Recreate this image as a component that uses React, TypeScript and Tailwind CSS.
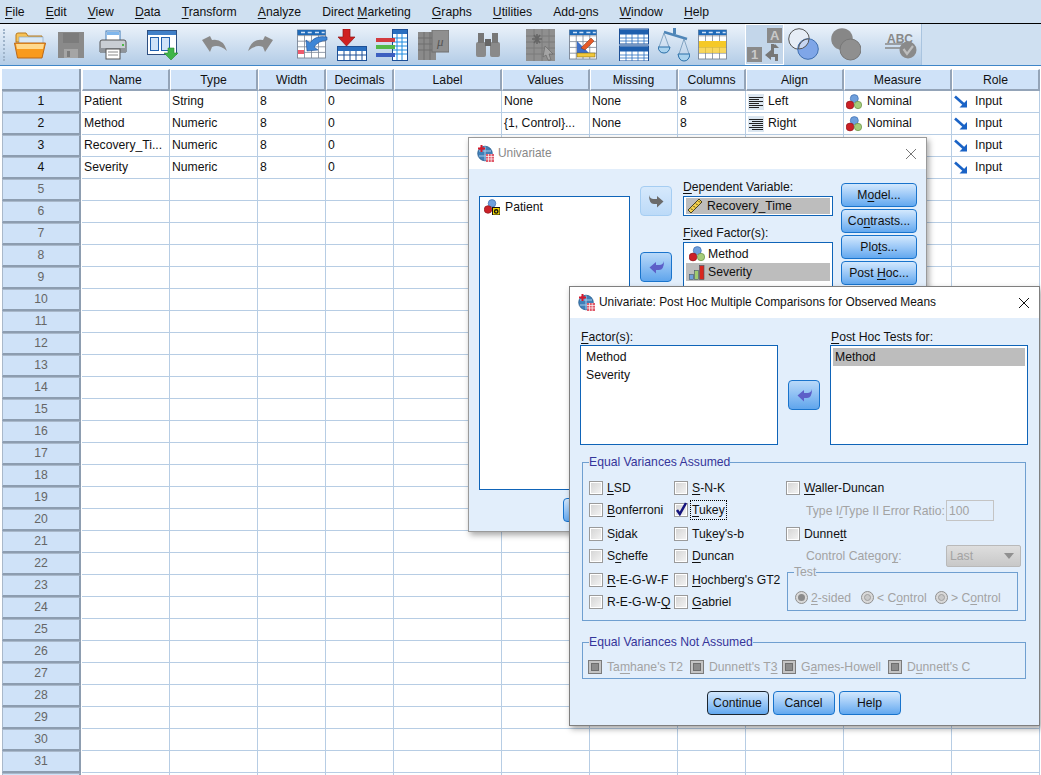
import React from 'react';

const MENU: [string, number][] = [
  ['File', 0], ['Edit', 0], ['View', 0], ['Data', 0], ['Transform', 0], ['Analyze', 0],
  ['Direct Marketing', 7], ['Graphs', 0], ['Utilities', 0], ['Add-ons', 4], ['Window', 0], ['Help', 0],
];

const COLUMNS = ['Name', 'Type', 'Width', 'Decimals', 'Label', 'Values', 'Missing', 'Columns', 'Align', 'Measure', 'Role'];

// rows 3 and 4 are covered by the dialogs from Values onward, so those cells stay empty
const ROWS = [
  { name: 'Patient', type: 'String', values: 'None', missing: 'None', cols: '8', align: 'Left', measure: 'nominal', label: 'Nominal' },
  { name: 'Method', type: 'Numeric', values: '{1, Control}...', missing: 'None', cols: '8', align: 'Right', measure: 'nominal', label: 'Nominal' },
  { name: 'Recovery_Ti...', type: 'Numeric', values: '', missing: '', cols: '', align: '', measure: 'scale', label: '' },
  { name: 'Severity', type: 'Numeric', values: '', missing: '', cols: '', align: '', measure: '', label: '' },
];

const cell = 'h-[22px] border-r border-b border-[#b7cde4] bg-white pl-[2px] leading-[21px] whitespace-nowrap overflow-hidden';
const rowHead = 'ml-[2px] mr-[1px] flex h-[22px] items-center justify-center border border-[#a9b8ca] border-r-2 border-b-2 border-r-[#8d9db0] border-b-[#8d9db0] bg-[#cfe2f8]';

// label with one underlined mnemonic letter
function M({ t, u }: { t: string; u?: number }) {
  if (u === undefined) return <span>{t}</span>;
  return (
    <span>
      {t.slice(0, u)}
      <span className="underline underline-offset-2">{t[u]}</span>
      {t.slice(u + 1)}
    </span>
  );
}

function Balls({ size = 16 }: { size?: number }) {
  return (
    <svg width={size} height={size} viewBox="0 0 16 16" className="shrink-0">
      <circle cx="8.3" cy="4.6" r="4" fill="#6f9fdc" stroke="#3f6fb0" strokeWidth="0.7" />
      <circle cx="4" cy="11" r="3.9" fill="#cc2027" stroke="#8f1a1f" strokeWidth="0.7" />
      <circle cx="12" cy="11" r="3.7" fill="#a5cc7a" stroke="#688f45" strokeWidth="0.7" />
    </svg>
  );
}

function InputArrow() {
  return (
    <svg width="14" height="14" viewBox="0 0 14 14" className="shrink-0">
      <path d="M1 1.5 L10 9.5" stroke="#1a63c6" strokeWidth="2.6" />
      <path d="M13 5 V12.5 H5.5 Z" fill="#1a63c6" />
    </svg>
  );
}

function AlignIcon({ right }: { right?: boolean }) {
  const lines = right ? [[1, 15], [4, 15], [1, 15], [4, 15], [1, 15], [4, 15]] : [[1, 15], [1, 11], [1, 15], [1, 11], [1, 15], [1, 11]];
  return (
    <svg width="16" height="16" viewBox="0 0 16 16" className="shrink-0">
      <rect width="16" height="16" fill="#dbe6f0" />
      {lines.map(([a, b], i) => (
        <path key={i} d={`M${a} ${3.5 + i * 2} H${b}`} stroke="#222" strokeWidth="1" />
      ))}
    </svg>
  );
}

function Ruler() {
  return (
    <svg width="16" height="16" viewBox="0 0 16 16" className="shrink-0">
      <path d="M1 12 L12 1 L15 4 L4 15 Z" fill="#f2cf4d" stroke="#3a3315" strokeWidth="0.9" />
      <path d="M4 10.5 L5.5 12 M6.5 8 L8 9.5 M9 5.5 L10.5 7 M11.5 3 L13 4.5" stroke="#3a3315" strokeWidth="0.9" />
    </svg>
  );
}

function Bars() {
  return (
    <svg width="16" height="16" viewBox="0 0 16 16" className="shrink-0">
      <rect x="0.5" y="10.5" width="4" height="5" fill="#6f9fdc" stroke="#456" strokeWidth="0.6" />
      <rect x="5.5" y="6.5" width="4" height="9" fill="#9fcb6f" stroke="#456" strokeWidth="0.6" />
      <rect x="10.5" y="1.5" width="4.5" height="14" fill="#d9261f" stroke="#456" strokeWidth="0.6" />
    </svg>
  );
}

function StringVar() {
  return (
    <svg width="16" height="16" viewBox="0 0 16 16" className="shrink-0">
      <circle cx="8" cy="4.4" r="3.8" fill="#6f9fdc" stroke="#3f6fb0" strokeWidth="0.7" />
      <circle cx="4" cy="10.5" r="3.8" fill="#cc2027" stroke="#8f1a1f" strokeWidth="0.7" />
      <rect x="8.5" y="8.5" width="7.5" height="7.5" fill="#f5d800" stroke="#111" />
      <circle cx="12.2" cy="12.4" r="1.7" fill="none" stroke="#111" strokeWidth="1.4" />
    </svg>
  );
}

function AppIcon() {
  return (
    <svg width="17" height="17" viewBox="0 0 17 17" className="shrink-0">
      <circle cx="8" cy="8.5" r="7.3" fill="#3f7fb8" stroke="#2d5f8f" strokeWidth="0.8" />
      <path d="M2 6 H14 M2 11 H14 M8 1.5 V15.5" stroke="#a9cbe8" strokeWidth="1" />
      <path d="M4.5 0 V7 M1 3.5 H8" stroke="#d7182a" strokeWidth="2" />
      <rect x="9" y="9" width="8" height="8" fill="#e05a6a" />
      <path d="M9 11.5 H17 M9 14 H17 M11.5 9 V17 M14.2 9 V17" stroke="#fff" strokeWidth="0.7" />
    </svg>
  );
}

function GridTable({ x, y, w, h, cols, rows, line = '#1c4f96' }: { x: number; y: number; w: number; h: number; cols: number; rows: number; line?: string }) {
  const out: React.ReactNode[] = [];
  for (let i = 1; i < cols; i++) {
    const px = x + (w * i) / cols;
    out.push(<path key={'c' + i} d={`M${px} ${y} V${y + h}`} stroke={line} strokeWidth="0.8" />);
  }
  for (let i = 1; i < rows; i++) {
    const py = y + (h * i) / rows;
    out.push(<path key={'r' + i} d={`M${x} ${py} H${x + w}`} stroke={line} strokeWidth="0.8" />);
  }
  return (
    <g>
      <rect x={x} y={y} width={w} height={h} fill="#fff" stroke={line} strokeWidth="0.9" />
      {out}
    </g>
  );
}

function TopTable({ w, h }: { w: number; h: number }) {
  return (
    <g>
      <GridTable x={0.5} y={1} w={w - 1} h={h - 2} cols={4} rows={5} line="#7a8595" />
      <rect x={0.5} y={1} width={w - 1} height={5} fill="#1f6ab8" />
      <path d={`M4 3.5 h4 M${w * 0.37} 3.5 h4 M${w * 0.62} 3.5 h4 M${w * 0.85} 3.5 h3`} stroke="#cfe2f8" strokeWidth="1.4" />
    </g>
  );
}

const gi = 'fill-[#8a8a8a]';

function Toolbar() {
  return (
    <div className="flex h-[41px] w-[922px] items-center border-r border-[#a9c4df] bg-gradient-to-b from-[#ecf3fb] to-[#b3cce6] pl-[3px]">
      <div className="h-[32px] w-[3px] shrink-0 border-l-2 border-dotted border-[#9fb4ca]" />
      {/* open */}
      <svg width="32" height="28" viewBox="0 0 32 28" className="ml-[8px] shrink-0">
        <path d="M2 4 Q2 2 4 2 H12 L14 5 H28 V11 H2 Z" fill="#f6c257" stroke="#b9791d" />
        <rect x="5" y="6" width="24" height="8" fill="#d8e8f6" stroke="#7f9fc0" strokeWidth="0.6" />
        <path d="M0.5 12 H31.5 L28 27 H3.5 Z" fill="#f99a1c" stroke="#b9681a" />
        <path d="M2 13 H30 L29 18 H3 Z" fill="#ffd98d" />
      </svg>
      {/* save */}
      <svg width="26" height="26" viewBox="0 0 26 26" className="ml-[12px] shrink-0">
        <rect width="26" height="26" className={gi} />
        <rect x="5" y="1" width="16" height="10" fill="#7c7c7c" />
        <rect x="6" y="17" width="14" height="9" fill="#a5a5a5" />
        <rect x="9" y="19" width="3" height="6" fill="#7c7c7c" />
      </svg>
      {/* print */}
      <svg width="28" height="30" viewBox="0 0 28 30" className="ml-[15px] shrink-0">
        <rect x="7" y="1" width="14" height="11" fill="#fff" stroke="#3f7ab8" />
        <rect x="8" y="2" width="12" height="3" fill="#7fb6ec" />
        <path d="M1 12 Q1 10 3 10 H25 Q27 10 27 12 V22 H1 Z" fill="#c9ced4" stroke="#555" />
        <rect x="1" y="18" width="26" height="4" fill="#8f949a" />
        <rect x="7" y="19" width="14" height="10" fill="#fff" stroke="#555" />
        <path d="M9 22 H19 M9 25 H19" stroke="#888" />
        <rect x="23" y="14" width="2" height="2" fill="#4db848" />
      </svg>
      {/* recall */}
      <svg width="31" height="30" viewBox="0 0 31 30" className="ml-[20px] shrink-0">
        <rect x="0.5" y="0.5" width="29" height="24" fill="#fff" stroke="#2e4f80" />
        <rect x="1" y="1" width="28" height="4" fill="#3f7fc8" />
        <rect x="3.5" y="7.5" width="8" height="13" fill="#cfe2f8" stroke="#1f5fae" />
        <rect x="14.5" y="7.5" width="8" height="13" fill="#cfe2f8" stroke="#1f5fae" />
        <path d="M21 18 H27 V23 H31 L24 30 L17 23 H21 Z" fill="#3fb548" stroke="#2b8a34" strokeWidth="0.6" />
      </svg>
      {/* undo */}
      <svg width="28" height="18" viewBox="0 0 28 18" className="ml-[23px] shrink-0">
        <path d="M1 4 L9 16 L11 11 Q18 8 26 15 Q22 2 11 4 L9 0 Z" className={gi} />
      </svg>
      {/* redo */}
      <svg width="28" height="18" viewBox="0 0 28 18" className="ml-[17px] shrink-0">
        <path d="M27 4 L19 16 L17 11 Q10 8 2 15 Q6 2 17 4 L19 0 Z" className={gi} />
      </svg>
      {/* go to case */}
      <svg width="31" height="31" viewBox="0 0 31 31" className="ml-[23px] shrink-0">
        <TopTable w={29} h={30} />
        <rect x="1" y="21" width="6" height="4" fill="#ee5a6c" />
        <path d="M30 8 Q18 6 13 14 L9 11 L10 22 L21 21 L17 18 Q21 12 30 11 Z" fill="#3e86d6" stroke="#1d4f96" strokeWidth="0.6" />
      </svg>
      {/* insert cases */}
      <svg width="30" height="32" viewBox="0 0 30 32" className="ml-[9px] shrink-0">
        <path d="M6 0 H13 V8 H18 L9.5 17 L1 8 H6 Z" fill="#cf2020" stroke="#8c1414" strokeWidth="0.7" />
        <rect x="0.5" y="17.5" width="29" height="14" fill="#fff" stroke="#1c4f96" />
        <rect x="1" y="18" width="28" height="4" fill="#2a6fc0" />
        <path d="M1 26 H29 M7 22 V31 M13 22 V31 M19 22 V31 M25 22 V31" stroke="#1c4f96" />
      </svg>
      {/* split */}
      <svg width="32" height="32" viewBox="0 0 32 32" className="ml-[9px] shrink-0">
        <rect x="16.5" y="0.5" width="15" height="31" fill="#fff" stroke="#1c4f96" />
        <rect x="17" y="1" width="14" height="4" fill="#2a6fc0" />
        <path d="M17 9 H31 M17 13 H31 M17 17 H31 M17 21 H31 M17 25 H31 M21 5 V31 M26 5 V31" stroke="#1c8be0" />
        <rect x="0" y="9" width="19" height="4" fill="#d23b3f" />
        <rect x="0" y="16" width="19" height="4" fill="#53b948" />
        <rect x="0" y="24" width="19" height="4" fill="#3d5fc0" />
      </svg>
      {/* variables, disabled */}
      <svg width="31" height="30" viewBox="0 0 31 30" className="ml-[10px] shrink-0">
        <rect x="0" y="2" width="18" height="28" className={gi} />
        <path d="M0 8 H18 M0 14 H18 M0 20 H18 M6 2 V30 M12 2 V30" stroke="#6f6f6f" />
        <rect x="14" y="0" width="17" height="22" fill="#8f8f8f" stroke="#6f6f6f" />
        <text x="19" y="16" fontSize="13" fontFamily="'Liberation Serif', serif" fontStyle="italic" fill="#555">μ</text>
      </svg>
      {/* find */}
      <svg width="28" height="26" viewBox="0 0 28 26" className="ml-[25px] shrink-0">
        <rect x="2" y="10" width="10" height="15" rx="2" className={gi} />
        <rect x="16" y="10" width="10" height="15" rx="2" className={gi} />
        <rect x="4" y="1" width="6" height="10" fill="#777" />
        <rect x="18" y="1" width="6" height="10" fill="#777" />
        <rect x="11" y="7" width="6" height="7" fill="#666" />
      </svg>
      {/* select cases, disabled */}
      <svg width="29" height="32" viewBox="0 0 29 32" className="ml-[24px] shrink-0">
        <rect x="0" y="0" width="29" height="32" fill="#8f8f8f" />
        <path d="M0 7 H29 M0 13 H29 M0 19 H29 M0 25 H29 M8 0 V32 M16 0 V32 M23 0 V32" stroke="#7b7b7b" />
        <path d="M8 6 L14 14 M14 6 L8 14 M11 5 V15 M6 10 H16" stroke="#666" strokeWidth="1.6" />
        <path d="M19 17 L27 25 H23 L25 31 H22 L20 26 L17 28 Z" fill="#a4a4a4" stroke="#6a6a6a" strokeWidth="0.7" />
      </svg>
      {/* weight / ruler table */}
      <svg width="28" height="32" viewBox="0 0 28 32" className="ml-[14px] shrink-0">
        <TopTable w={28} h={31} />
        <path d="M8 12 V24 H20 Z" fill="#3d6fc8" />
        <path d="M12 19 L22 9 L25 12 L16 21 Z" fill="#e65a28" stroke="#7a3015" strokeWidth="0.5" />
        <rect x="8" y="24" width="18" height="4" fill="#f2c83a" stroke="#6e5a10" strokeWidth="0.5" />
      </svg>
      {/* split file tables */}
      <svg width="30" height="33" viewBox="0 0 30 33" className="ml-[22px] shrink-0">
        <rect x="0.5" y="1" width="29" height="15" fill="#fff" stroke="#1c4f96" />
        <rect x="1" y="1.5" width="28" height="5" fill="#1f5fae" />
        <path d="M1 10 H29 M1 13 H29 M7 6 V16 M13 6 V16 M19 6 V16 M25 6 V16" stroke="#2a6fc0" strokeWidth="0.8" />
        <rect x="0.5" y="18" width="29" height="15" fill="#fff" stroke="#1c4f96" />
        <rect x="1" y="18.5" width="28" height="5" fill="#1f5fae" />
        <path d="M1 27 H29 M1 30 H29 M7 23 V33 M13 23 V33 M19 23 V33 M25 23 V33" stroke="#2a6fc0" strokeWidth="0.8" />
      </svg>
      {/* weight scales */}
      <svg width="32" height="34" viewBox="0 0 32 34" className="ml-[9px] shrink-0">
        <path d="M15 0 H18 V6 H15 Z" fill="#4f86b8" />
        <path d="M6 4 L29 11" stroke="#4f86b8" strokeWidth="2.4" />
        <path d="M6 5 L1 19 M6 5 L11 19 M26 11 L21 26 M26 11 L31 26" stroke="#6f95b8" strokeWidth="0.8" />
        <path d="M0 19 H12 Q11 25 6 25 Q1 25 0 19 Z" fill="#a9d2ee" stroke="#2a6fa8" />
        <path d="M20 26 H32 Q31 33 26 33 Q21 33 20 26 Z" fill="#a9d2ee" stroke="#2a6fa8" />
      </svg>
      {/* select table */}
      <svg width="29" height="32" viewBox="0 0 29 32" className="ml-[8px] shrink-0">
        <TopTable w={29} h={31} />
        <rect x="1" y="12" width="27" height="6" fill="#f5c928" />
        <rect x="1" y="18" width="27" height="6" fill="#f5c928" opacity="0.75" />
      </svg>
      {/* value labels, pressed */}
      <div className="ml-[18px] flex h-[41px] w-[39px] shrink-0 items-center justify-center border border-white bg-[#c3d6ea]">
        <svg width="35" height="34" viewBox="0 0 35 34">
          <rect x="20" y="0" width="15" height="15" className={gi} />
          <text x="23" y="12" fontSize="13" fontWeight="bold" fontFamily="'Liberation Sans', sans-serif" fill="#c9c9c9">A</text>
          <rect x="0" y="19" width="15" height="15" className={gi} />
          <text x="4" y="31" fontSize="13" fontWeight="bold" fontFamily="'Liberation Sans', sans-serif" fill="#c9c9c9">1</text>
          <path d="M24 16 H27 V26 H31 V33 H28 V29 H24 V32 L18 27 L24 22 Z" fill="#777" />
          <path d="M28 16 L24 20 H32 Z" fill="#777" />
        </svg>
      </div>
      {/* circles */}
      <svg width="31" height="33" viewBox="0 0 31 33" className="ml-[4px] shrink-0">
        <circle cx="11" cy="11" r="10.3" fill="#e6edf6" stroke="#555" />
        <circle cx="20" cy="21" r="10.3" fill="#7fa6e8" stroke="#3f6fb0" />
        <path d="M10.5 21 A10.3 10.3 0 0 1 21 10.8 A10.3 10.3 0 0 1 10.5 21 Z" fill="#c7d6f2" stroke="#555" />
      </svg>
      {/* grey circles */}
      <svg width="30" height="33" viewBox="0 0 30 33" className="ml-[12px] shrink-0">
        <circle cx="11" cy="11" r="10.8" fill="#878787" />
        <circle cx="19.5" cy="21.5" r="10.5" fill="#8f8f8f" stroke="#777" />
      </svg>
      {/* spell check */}
      <svg width="32" height="28" viewBox="0 0 32 28" className="ml-[24px] shrink-0">
        <text x="2" y="12" fontSize="12" fontWeight="bold" fontFamily="'Liberation Sans', sans-serif" fill="#888">ABC</text>
        <path d="M0 13 H28 M0 17 H18" stroke="#888" strokeWidth="1.4" />
        <circle cx="23" cy="19" r="8.5" fill="#8a8a8a" />
        <path d="M18.5 18 L22 23 L28 15" fill="none" stroke="#bdbdbd" strokeWidth="2.2" />
      </svg>
    </div>
  );
}

function ArrowBtn({ right, off }: { right?: boolean; off?: boolean }) {
  return (
    <div
      className={
        off
          ? 'flex h-[30px] w-[32px] items-center justify-center rounded-[4px] border border-[#a5cdf2] bg-gradient-to-b from-[#d6e9fc] to-[#bcdaf8]'
          : 'flex h-[30px] w-[32px] items-center justify-center rounded-[4px] border border-[#1a74cc] bg-gradient-to-b from-[#b9d9f9] to-[#5fa5ec]'
      }
    >
      <svg width="15" height="13" viewBox="0 0 15 13" className={right ? '' : '-scale-x-100'}>
        <path d="M0 0 Q1 4 4.5 4 H8 V1 L14.5 6.5 L8 12.5 V9 H5 Q0 9 0 0 Z" fill={off ? '#6b6b6b' : '#5d5fc8'} />
      </svg>
    </div>
  );
}

function Btn({ children, w = 'w-[76px]', focus }: { children: React.ReactNode; w?: string; focus?: boolean }) {
  return (
    <div
      className={`flex h-[24px] ${w} shrink-0 items-center justify-center rounded-[4px] border bg-gradient-to-b from-[#d3e8fd] to-[#62a8ef] ${focus ? 'border-[#1c2630]' : 'border-[#1873cc]'}`}
    >
      {children}
    </div>
  );
}

function Check({ on, off }: { on?: boolean; off?: boolean }) {
  return (
    <div
      className={`relative flex h-[14px] w-[14px] shrink-0 items-center justify-center border ${off ? 'border-[#7b7b7b] bg-[#c4c4c4]' : 'border-[#9a9a9a] bg-white'}`}
    >
      <div className={off ? 'h-[8px] w-[8px] border border-[#6f6f6f] bg-[#8c8c8c]' : 'h-[10px] w-[10px] bg-gradient-to-br from-[#d6d6d6] to-[#f2f2f2]'} />
      {on && (
        <svg width="13" height="15" viewBox="0 0 13 15" className="absolute left-[0px] top-[-3px]">
          <path d="M2 9 L4.8 13 L11 2" fill="none" stroke="#14147e" strokeWidth="2.5" />
        </svg>
      )}
    </div>
  );
}

function CheckRow({ t, u, on, focus }: { t: string; u: number; on?: boolean; focus?: boolean }) {
  return (
    <div className="flex h-[14px] items-center gap-[4px]">
      <Check on={on} />
      <span className={focus ? '-ml-[2px] border border-dotted border-black px-[1px] leading-[18px]' : ''}>
        <M t={t} u={u} />
      </span>
    </div>
  );
}

function Radio({ t, u, on, w }: { t: string; u: number; on?: boolean; w: string }) {
  return (
    <div className={`flex ${w} items-center gap-[3px] text-[#a3a3a3]`}>
      <div className="flex h-[13px] w-[13px] shrink-0 items-center justify-center rounded-full border border-[#909090] bg-[#d9d9d9]">
        <div className={`h-[7px] w-[7px] rounded-full ${on ? 'bg-[#8b8b8b]' : 'border border-[#a0a0a0] bg-[#c9c9c9]'}`} />
      </div>
      <M t={t} u={u} />
    </div>
  );
}

function TitleBar({ title, dim }: { title: string; dim?: boolean }) {
  return (
    <div className={`flex h-[31px] shrink-0 items-center bg-white pl-[8px] pr-[9px] text-[11.9px] ${dim ? 'text-[#888]' : 'text-[#111]'}`}>
      <AppIcon />
      <span className="ml-[4px] flex-1">{title}</span>
      <svg width="12" height="12" viewBox="0 0 12 12">
        <path d="M1 1 L11 11 M11 1 L1 11" stroke={dim ? '#777' : '#111'} strokeWidth="1" />
      </svg>
    </div>
  );
}

function UnivariateDialog() {
  return (
    <div className="absolute left-[468px] top-[137px] flex h-[395px] w-[459px] flex-col border border-[#9a9a9a] bg-[#e2eefb] shadow-[2px_3px_6px_rgba(0,0,0,0.35)]">
      <TitleBar title="Univariate" dim />
      <div className="flex items-start pl-[10px] pt-[27px]">
        <div className="h-[294px] w-[151px] shrink-0 border border-[#0f64b8] bg-white pl-[4px] pt-[1px]">
          <div className="flex h-[18px] items-center gap-[5px]">
            <StringVar />
            Patient
          </div>
        </div>
        <div className="ml-[10px] -mt-[10px] flex w-[32px] shrink-0 flex-col gap-[36px]">
          <ArrowBtn right off />
          <ArrowBtn />
        </div>
        <div className="ml-[11px] -mt-[17px] flex w-[150px] shrink-0 flex-col">
          <div className="h-[17px] leading-[17px]"><M t="Dependent Variable:" u={0} /></div>
          <div className="flex h-[20px] items-center border border-[#0f64b8] bg-white p-[2px]">
            <div className="flex h-[16px] w-full items-center gap-[4px] bg-[#bdbdbd] pl-[1px]">
              <Ruler />
              Recovery_Time
            </div>
          </div>
          <div className="mt-[9px] h-[17px] leading-[17px]"><M t="Fixed Factor(s):" u={0} /></div>
          <div className="h-[72px] border border-[#0f64b8] bg-white p-[2px]">
            <div className="flex h-[18px] items-center gap-[3px] pl-[3px]">
              <Balls />
              Method
            </div>
            <div className="flex h-[18px] items-center gap-[3px] bg-[#bdbdbd] pl-[3px]">
              <Bars />
              Severity
            </div>
          </div>
        </div>
        <div className="ml-[8px] -mt-[13px] flex flex-col gap-[2px]">
          <Btn><M t="Model..." u={1} /></Btn>
          <Btn><M t="Contrasts..." u={2} /></Btn>
          <Btn><M t="Plots..." u={3} /></Btn>
          <Btn><M t="Post Hoc..." u={5} /></Btn>
        </div>
      </div>
      <div className="pl-[94px] pt-[8px]">
        <Btn w="w-[62px]"><span /></Btn>
      </div>
    </div>
  );
}

function PostHocDialog() {
  return (
    <div className="absolute left-[569px] top-[286px] flex h-[440px] w-[471px] flex-col border border-[#7f7f7f] bg-[#e2eefb] shadow-[2px_3px_6px_rgba(0,0,0,0.35)]">
      <TitleBar title="Univariate: Post Hoc Multiple Comparisons for Observed Means" />
      <div className="flex items-start pl-[10px] pt-[10px]">
        <div className="w-[198px] shrink-0">
          <div className="h-[17px] pl-[1px] pt-[1px] leading-[17px]"><M t="Factor(s):" u={0} /></div>
          <div className="h-[100px] border border-[#0f64b8] bg-white pl-[5px] pt-[2px]">
            <div className="h-[18px] leading-[18px]">Method</div>
            <div className="h-[18px] leading-[18px]">Severity</div>
          </div>
        </div>
        <div className="ml-[10px] mt-[52px] shrink-0"><ArrowBtn /></div>
        <div className="ml-[10px] w-[198px] shrink-0">
          <div className="h-[17px] pl-[1px] pt-[1px] leading-[17px]"><M t="Post Hoc Tests for:" u={0} /></div>
          <div className="h-[100px] border border-[#0f64b8] bg-white p-[2px]">
            <div className="h-[18px] bg-[#bdbdbd] pl-[2px] leading-[18px]">Method</div>
          </div>
        </div>
      </div>

      <fieldset className="ml-[12px] mt-[8px] h-[168px] w-[444px] shrink-0 border border-[#6f9fd0] pl-[6px]">
        <legend className="px-0 text-[#35359a]">Equal Variances Assumed</legend>
        <div className="grid grid-cols-[85px_112px_1fr] grid-rows-[22px_24px_22px_24px_22px_22px] items-start pt-[10px]">
          <CheckRow t="LSD" u={0} />
          <CheckRow t="S-N-K" u={0} />
          <CheckRow t="Waller-Duncan" u={0} />
          <CheckRow t="Bonferroni" u={0} />
          <CheckRow t="Tukey" u={0} on focus />
          <div className="-mt-[3px] flex items-center pl-[20px] text-[#a3a3a3]">
            <span className="flex-1"><M t="Type I/Type II Error Ratio:" u={6} /></span>
            <div className="mr-[31px] flex h-[21px] w-[48px] items-center border border-[#c4c4c4] pl-[2px]">100</div>
          </div>
          <CheckRow t="Sidak" u={1} />
          <CheckRow t="Tukey's-b" u={2} />
          <CheckRow t="Dunnett" u={5} />
          <CheckRow t="Scheffe" u={1} />
          <CheckRow t="Duncan" u={0} />
          <div className="-mt-[4px] flex items-center pl-[20px] text-[#a3a3a3]">
            <span className="flex-1"><M t="Control Category:" u={15} /></span>
            <div className="mr-[4px] flex h-[22px] w-[75px] items-center justify-between rounded-[2px] border border-[#b9b9b9] bg-gradient-to-b from-[#dedede] to-[#c8c8c8] px-[3px]">
              Last
              <svg width="10" height="6" viewBox="0 0 10 6" className="mr-[3px]"><path d="M0 0 H10 L5 6 Z" fill="#909090" /></svg>
            </div>
          </div>
          <CheckRow t="R-E-G-W-F" u={0} />
          <CheckRow t="Hochberg's GT2" u={0} />
          <fieldset className="row-span-2 -mt-[10px] ml-[1px] mr-[7px] h-[48px] border border-[#6f9fd0] pl-[7px]">
            <legend className="-ml-[1px] px-0 text-[#a3a3a3]">Test</legend>
            <div className="flex pt-[7px]">
              <Radio t="2-sided" u={0} on w="w-[66px]" />
              <Radio t="< Control" u={3} w="w-[74px]" />
              <Radio t="> Control" u={3} w="w-[74px]" />
            </div>
          </fieldset>
          <CheckRow t="R-E-G-W-Q" u={8} />
          <CheckRow t="Gabriel" u={0} />
        </div>
      </fieldset>

      <fieldset className="ml-[12px] mt-[12px] h-[46px] w-[444px] shrink-0 border border-[#6f9fd0] pl-[5px]">
        <legend className="ml-[1px] px-0 text-[#35359a]">Equal Variances Not Assumed</legend>
        <div className="grid grid-cols-[102px_92px_106px_auto] pt-[7px] text-[#a3a3a3]">
          <div className="flex items-center gap-[5px]"><Check off /><M t="Tamhane's T2" u={2} /></div>
          <div className="flex items-center gap-[5px]"><Check off /><M t="Dunnett's T3" u={11} /></div>
          <div className="flex items-center gap-[5px]"><Check off /><M t="Games-Howell" u={1} /></div>
          <div className="flex items-center gap-[5px]"><Check off /><M t="Dunnett's C" u={1} /></div>
        </div>
      </fieldset>

      <div className="mt-[12px] flex justify-center gap-[4px] pr-[2px]">
        <Btn w="w-[62px]" focus>Continue</Btn>
        <Btn w="w-[62px]">Cancel</Btn>
        <Btn w="w-[62px]">Help</Btn>
      </div>
    </div>
  );
}

export default function App() {
  const blanks = Array.from({ length: 28 }, (_, i) => i + 5);
  return (
    <div className="relative h-[775px] w-[1041px] overflow-hidden bg-white font-['Liberation_Sans',sans-serif] text-[12.2px] text-[#111]">
      <div className="flex h-[24px] items-center gap-[21px] border-b border-black bg-[#cfe0f1] pl-[5px] pt-[1px]">
        {MENU.map(([t, u]) => (
          <M key={t} t={t} u={u} />
        ))}
      </div>
      <div className="h-[42px] border-b border-[#3f86c8] bg-[#cfe0f1]">
        <Toolbar />
      </div>

      <div className="grid w-[1040px] grid-cols-[82px_88px_88px_68px_68px_108px_88px_88px_68px_98px_108px_88px] pt-[3px]">
        <div className="ml-[2px] mr-[1px] h-[22px] border-r-2 border-b-2 border-[#8d9db0] bg-[#cfe2f8]" />
        {COLUMNS.map(c => (
          <div key={c} className="flex h-[22px] items-center justify-center border border-white border-r-2 border-b-2 border-r-[#94a4b8] border-b-[#94a4b8] bg-[#cfe2f8] pt-[2px]">
            {c}
          </div>
        ))}
        {ROWS.map((r, i) => (
          <React.Fragment key={r.name}>
            <div className={rowHead}>{i + 1}</div>
            <div className={cell}>{r.name}</div>
            <div className={cell}>{r.type}</div>
            <div className={cell}>8</div>
            <div className={cell}>0</div>
            <div className={cell} />
            <div className={cell}>{r.values}</div>
            <div className={cell}>{r.missing}</div>
            <div className={cell}>{r.cols}</div>
            <div className={`${cell} flex items-center gap-[4px]`}>
              {r.align && <AlignIcon right={r.align === 'Right'} />}
              {r.align}
            </div>
            <div className={`${cell} flex items-center gap-[5px]`}>
              {r.measure === 'nominal' && <Balls />}
              {r.measure === 'scale' && <Ruler />}
              {r.label}
            </div>
            <div className={`${cell} flex items-center gap-[7px]`}><InputArrow />Input</div>
          </React.Fragment>
        ))}
        {blanks.map(n => (
          <React.Fragment key={n}>
            <div className={`${rowHead} text-[#666]`}>{n}</div>
            {COLUMNS.map(c => (
              <div key={c} className={cell} />
            ))}
          </React.Fragment>
        ))}
      </div>

      <UnivariateDialog />
      <PostHocDialog />
    </div>
  );
}
